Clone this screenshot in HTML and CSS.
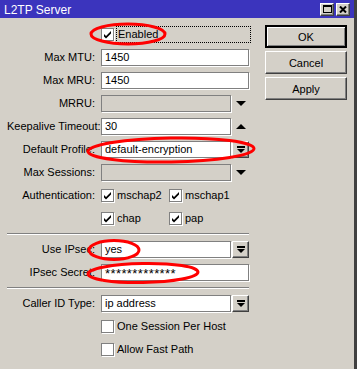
FILE: index.html
```html
<!DOCTYPE html>
<html lang="en">

<head>
    <meta charset="UTF-8">
    <title>L2TP Server</title>
    <link rel="stylesheet" href="styles.css">
</head>

<body>
    <div class="window">
        <div class="titlebar">
            <span class="title">L2TP Server</span>
            <div class="title-buttons">
                <span class="tbtn">
                    <svg width="9" height="8" viewBox="0 0 9 8"><path d="M0.5 1.5h8v6h-8z" fill="none" stroke="#000" stroke-width="1" shape-rendering="crispEdges"/><rect x="0" y="0" width="9" height="2" fill="#000"/></svg>
                </span>
                <span class="tbtn">
                    <svg width="8" height="7" viewBox="0 0 8 7"><path d="M1 0.5l6 6M7 0.5l-6 6" stroke="#000" stroke-width="2"/></svg>
                </span>
            </div>
        </div>

        <div class="content">
            <div class="form">
                <div class="label"></div>
                <div class="field">
                    <label class="check">
                        <span class="box"><svg class="tick" viewBox="0 0 11 11"><path d="M2 5l2 2 5-5v2.5l-5 5-2-2z"/></svg></span>
                        <span class="check-text focused">Enabled</span>
                    </label>
                </div>

                <div class="label">Max MTU:</div>
                <div class="field"><div class="input">1450</div></div>

                <div class="label">Max MRU:</div>
                <div class="field"><div class="input">1450</div></div>

                <div class="label">MRRU:</div>
                <div class="field">
                    <div class="input disabled"></div>
                    <span class="side"><span class="arrow down"></span></span>
                </div>

                <div class="label">Keepalive Timeout:</div>
                <div class="field">
                    <div class="input">30</div>
                    <span class="side"><span class="arrow up"></span></span>
                </div>

                <div class="label">Default Profile:</div>
                <div class="field">
                    <div class="input">default-encryption</div>
                    <span class="drop"><span class="drop-icon"></span></span>
                </div>

                <div class="label">Max Sessions:</div>
                <div class="field">
                    <div class="input disabled"></div>
                    <span class="side"><span class="arrow down"></span></span>
                </div>

                <div class="label">Authentication:</div>
                <div class="field checks">
                    <label class="check"><span class="box"><svg class="tick" viewBox="0 0 11 11"><path d="M2 5l2 2 5-5v2.5l-5 5-2-2z"/></svg></span><span class="check-text">mschap2</span></label>
                    <label class="check"><span class="box"><svg class="tick" viewBox="0 0 11 11"><path d="M2 5l2 2 5-5v2.5l-5 5-2-2z"/></svg></span><span class="check-text">mschap1</span></label>
                </div>

                <div class="label"></div>
                <div class="field checks">
                    <label class="check"><span class="box"><svg class="tick" viewBox="0 0 11 11"><path d="M2 5l2 2 5-5v2.5l-5 5-2-2z"/></svg></span><span class="check-text">chap</span></label>
                    <label class="check"><span class="box"><svg class="tick" viewBox="0 0 11 11"><path d="M2 5l2 2 5-5v2.5l-5 5-2-2z"/></svg></span><span class="check-text">pap</span></label>
                </div>

                <div class="separator"></div>

                <div class="label">Use IPsec:</div>
                <div class="field">
                    <div class="input">yes</div>
                    <span class="drop"><span class="drop-icon"></span></span>
                </div>

                <div class="label">IPsec Secret:</div>
                <div class="field"><div class="input secret">*************</div></div>

                <div class="separator"></div>

                <div class="label">Caller ID Type:</div>
                <div class="field">
                    <div class="input">ip address</div>
                    <span class="drop"><span class="drop-icon"></span></span>
                </div>

                <div class="label"></div>
                <div class="field">
                    <label class="check"><span class="box"></span><span class="check-text">One Session Per Host</span></label>
                </div>

                <div class="label"></div>
                <div class="field">
                    <label class="check"><span class="box"></span><span class="check-text">Allow Fast Path</span></label>
                </div>
            </div>

            <div class="actions">
                <button class="btn default">OK</button>
                <button class="btn">Cancel</button>
                <button class="btn">Apply</button>
            </div>
        </div>

        <!-- red marks drawn over the dialog -->
        <svg class="marks" width="357" height="369" viewBox="0 0 357 369">
            <ellipse cx="128" cy="34" rx="37" ry="10" />
            <ellipse cx="171" cy="150" rx="83" ry="12" transform="rotate(-1 171 150)" />
            <ellipse cx="114" cy="250" rx="25" ry="9.5" />
            <ellipse cx="143" cy="273" rx="55" ry="9.5" transform="rotate(-1 143 273)" />
        </svg>
    </div>
</body>

</html>
```

FILE: styles.css
```css
body {
    margin: 0;
    padding: 0;
    background-color: #d4d0c8;
    font-family: "Liberation Sans", Arial, sans-serif;
    font-size: 11px;
    color: #000;
}

.window {
    position: relative;
    width: 354px;
    height: 369px;
    background-color: #d4d0c8;
    border-right: 3px solid #404040;
}

.titlebar {
    height: 18px;
    display: flex;
    align-items: center;
    justify-content: space-between;
    padding: 0 4px;
    background-color: #3b34bd;
    color: #fff;
}

.title {
    font-size: 12px;
    padding-top: 1px;
}

.title-buttons {
    display: flex;
    gap: 2px;
}

.tbtn {
    width: 12px;
    height: 11px;
    display: flex;
    align-items: center;
    justify-content: center;
    background-color: #d4d0c8;
    border: 1px solid;
    border-color: #fff #404040 #404040 #fff;
    box-shadow: inset -1px -1px #808080;
}

.content {
    display: flex;
    gap: 16px;
    padding: 8px 0 0 7px;
}

.form {
    display: grid;
    grid-template-columns: 88px 148px;
    column-gap: 6px;
    row-gap: 6px;
    align-items: center;
}

.label {
    height: 17px;
    line-height: 17px;
    text-align: right;
    white-space: nowrap;
}

.field {
    height: 17px;
    display: flex;
    align-items: center;
    gap: 1px;
}

.input {
    flex: 1;
    height: 15px;
    line-height: 15px;
    padding-left: 3px;
    background-color: #fff;
    border: 1px solid #808080;
    box-shadow: 1px 1px 0 #fff;
    white-space: nowrap;
    overflow: hidden;
}

.input.disabled {
    background-color: #d4d0c8;
}

.input.secret {
    font-size: 13px;
    letter-spacing: 0.4px;
    line-height: 17px;
}

.side {
    width: 17px;
    height: 17px;
    display: flex;
    align-items: center;
    justify-content: center;
}

.arrow {
    width: 0;
    height: 0;
    border-left: 5px solid transparent;
    border-right: 5px solid transparent;
}

.arrow.down {
    border-top: 5px solid #000;
}

.arrow.up {
    border-bottom: 5px solid #000;
}

.drop {
    width: 15px;
    height: 15px;
    display: flex;
    align-items: center;
    justify-content: center;
    background-color: #d4d0c8;
    border: 1px solid;
    border-color: #fff #404040 #404040 #fff;
    box-shadow: inset -1px -1px #808080;
}

.drop-icon {
    width: 0;
    height: 0;
    border-left: 4px solid transparent;
    border-right: 4px solid transparent;
    border-top: 4px solid #000;
    position: relative;
    margin-top: 3px;
}

.drop-icon::before {
    content: "";
    position: absolute;
    left: -4px;
    top: -7px;
    width: 8px;
    height: 2px;
    background-color: #000;
}

.checks {
    gap: 0;
}

.checks .check:first-child {
    width: 68px;
}

.check {
    display: flex;
    align-items: center;
    gap: 2px;
    height: 17px;
}

.box {
    width: 11px;
    height: 11px;
    flex-shrink: 0;
    background-color: #fff;
    border: 1px solid #808080;
    box-shadow: 1px 1px 0 #fff;
}

.tick {
    display: block;
    width: 11px;
    height: 11px;
    fill: #000;
}

.check-text {
    white-space: nowrap;
    line-height: 15px;
    padding-left: 1px;
}

.check-text.focused {
    width: 132px;
    border: 1px dotted #000;
    padding-left: 1px;
}

.separator {
    grid-column: 1 / -1;
    height: 0;
    border-top: 1px solid #808080;
    border-bottom: 1px solid #fff;
}

.actions {
    display: flex;
    flex-direction: column;
    gap: 3px;
    margin-top: -1px;
}

.btn {
    width: 82px;
    height: 23px;
    font-family: "Liberation Sans", Arial, sans-serif;
    font-size: 11px;
    color: #000;
    background-color: #d4d0c8;
    border: 1px solid;
    border-color: #fff #404040 #404040 #fff;
    box-shadow: inset -1px -1px #808080;
    padding: 0;
}

.btn.default {
    border-width: 2px;
    border-color: #000;
    box-shadow: inset 1px 1px #fff, inset -1px -1px #808080;
}

.marks {
    position: absolute;
    top: 0;
    left: 0;
    pointer-events: none;
}

.marks ellipse {
    fill: none;
    stroke: #f00;
    stroke-width: 3;
}
```
